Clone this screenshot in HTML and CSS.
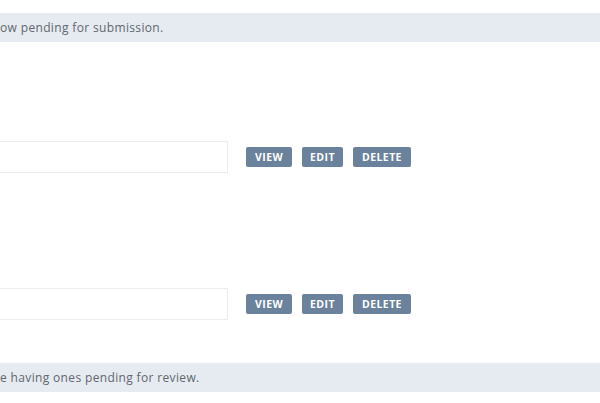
FILE: index.html
```html
<!DOCTYPE html>
<html>
<head>
<meta charset="utf-8">
<link rel="stylesheet" href="styles.css">
</head>
<body>
<div class="page">
  <div class="notice notice-top">ow pending for submission.</div>
  <div class="row row-first">
    <div class="field"></div>
    <div class="actions">
      <button class="btn btn-view">VIEW</button>
      <button class="btn btn-edit">EDIT</button>
      <button class="btn btn-delete">DELETE</button>
    </div>
  </div>
  <div class="row row-second">
    <div class="field"></div>
    <div class="actions">
      <button class="btn btn-view">VIEW</button>
      <button class="btn btn-edit">EDIT</button>
      <button class="btn btn-delete">DELETE</button>
    </div>
  </div>
  <div class="notice notice-bottom">e having ones pending for review.</div>
</div>
</body>
</html>
```
FILE: styles.css
```css
html, body {
  margin: 0;
  padding: 0;
  background: #ffffff;
}
body {
  font-family: "Open Sans", "Liberation Sans", sans-serif;
  width: 600px;
  height: 403px;
  overflow: hidden;
}
.page {
  display: flex;
  flex-direction: column;
}
.notice {
  height: 29px;
  background: #e5ebf1;
  color: #62676d;
  font-size: 12px;
  font-weight: 500;
  line-height: 29px;
  letter-spacing: 0.35px;
  white-space: nowrap;
}
.notice-top {
  margin-top: 13px;
}
.row {
  display: flex;
  align-items: center;
  margin-left: -20px;
}
.row-first {
  margin-top: 99px;
}
.row-second {
  margin-top: 115px;
}
.notice-bottom {
  margin-top: 43px;
}
.field {
  width: 246px;
  height: 30px;
  border: 1px solid #ececec;
  background: #fff;
  box-sizing: content-box;
}
.actions {
  display: flex;
  gap: 10px;
  margin-left: 18px;
}
.btn {
  height: 20px;
  border: 0;
  border-radius: 2px;
  background: #6a829c;
  color: #ffffff;
  font-family: "Open Sans", "Liberation Sans", sans-serif;
  font-weight: 700;
  font-size: 10.5px;
  padding: 0;
  letter-spacing: 0.4px;
}
.btn-view { width: 46px; }
.btn-edit { width: 41px; }
.btn-delete { width: 58px; }
```
